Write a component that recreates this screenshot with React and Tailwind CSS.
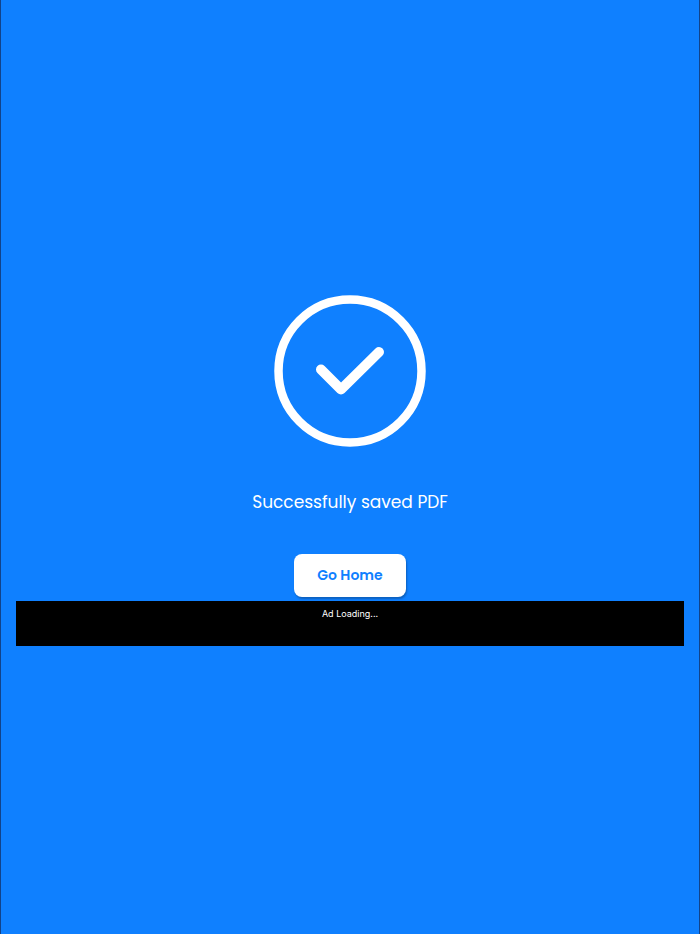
export default function App() {
  return (
    <main className="flex min-h-screen flex-col items-center justify-center border-x border-[#12438a] bg-[#0f80ff] px-[15px] pt-[6px] font-[Poppins,Inter,sans-serif] text-white">
      <svg
        viewBox="0 0 152 152"
        className="size-[152px]"
        fill="none"
        stroke="currentColor"
        aria-hidden="true"
      >
        <circle cx="76" cy="76" r="71.5" strokeWidth="8.5" />
        <path d="M47 74.500 L67 94.500 L105 57" strokeWidth="10" strokeLinecap="round" strokeLinejoin="round" />
      </svg>

      <p className="mt-[41px] text-[17px] leading-7">Successfully saved PDF</p>

      <button
        type="button"
        className="mt-[38px] h-[43px] w-28 rounded-lg bg-white text-sm font-semibold text-[#0f80ff] shadow-[1px_2px_2px_rgba(0,0,0,0.25)]"
      >
        Go Home
      </button>

      <div className="mt-1 h-[45px] w-full bg-black pt-2 text-center font-[Inter,sans-serif] text-[9px] leading-[10px]">
        Ad Loading...
      </div>
    </main>
  );
}
